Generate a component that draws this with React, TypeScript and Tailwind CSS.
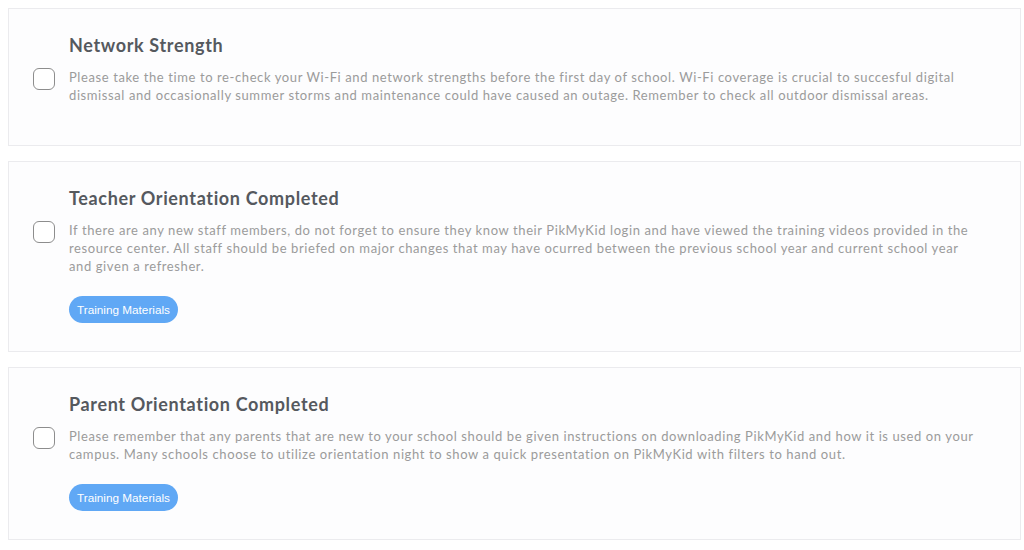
import React from 'react';

type Item = {
    title: string;
    body: string;
    link?: string;
};

const items: Item[] = [
    {
        title: 'Network Strength',
        body: 'Please take the time to re-check your Wi-Fi and network strengths before the first day of school. Wi-Fi coverage is crucial to succesful digital dismissal and occasionally summer storms and maintenance could have caused an outage. Remember to check all outdoor dismissal areas.',
    },
    {
        title: 'Teacher Orientation Completed',
        body: 'If there are any new staff members, do not forget to ensure they know their PikMyKid login and have viewed the training videos provided in the resource center. All staff should be briefed on major changes that may have ocurred between the previous school year and current school year and given a refresher.',
        link: 'Training Materials',
    },
    {
        title: 'Parent Orientation Completed',
        body: 'Please remember that any parents that are new to your school should be given instructions on downloading PikMyKid and how it is used on your campus. Many schools choose to utilize orientation night to show a quick presentation on PikMyKid with filters to hand out.',
        link: 'Training Materials',
    },
];

function ChecklistCard({ item }: { item: Item }) {
    return (
        <div className={"bg-[#fdfdfe] border border-[#ebebee] pl-6 pt-6 " + (item.link ? "pb-[28px]" : "pb-[41px]")}>
            <div className="grid grid-cols-[22px_1fr] gap-x-[14px]">
                <div></div>
                <h2 className="text-[18px] leading-6 font-bold text-[#55595e] tracking-[0.65px]">{item.title}</h2>
                <div className="pt-[11px]">
                    <input type="checkbox" className="appearance-none block w-[22px] h-[22px] rounded-[6px] border-[1.5px] border-[#8d8d8d] bg-white" />
                </div>
                <div className="pt-[11px] max-w-[905px]">
                    <p className="text-[13px] leading-[18px] text-[#9b9b9b] tracking-[0.6px]">{item.body}</p>
                    {item.link && (
                        <button className="mt-[21px] h-[27px] px-[8px] rounded-full bg-[#60a8f5] text-white text-[11.75px] font-['Liberation_Sans',Arial,sans-serif]">
                            {item.link}
                        </button>
                    )}
                </div>
            </div>
        </div>
    );
}

export default function App() {
    return (
        <div className="w-[1024px] h-[550px] bg-white pt-2 pl-2 pr-[3px] flex flex-col gap-[15px] font-['Lato','Open_Sans',sans-serif] overflow-hidden">
            {items.map((item) => (
                <ChecklistCard key={item.title} item={item} />
            ))}
        </div>
    );
}
